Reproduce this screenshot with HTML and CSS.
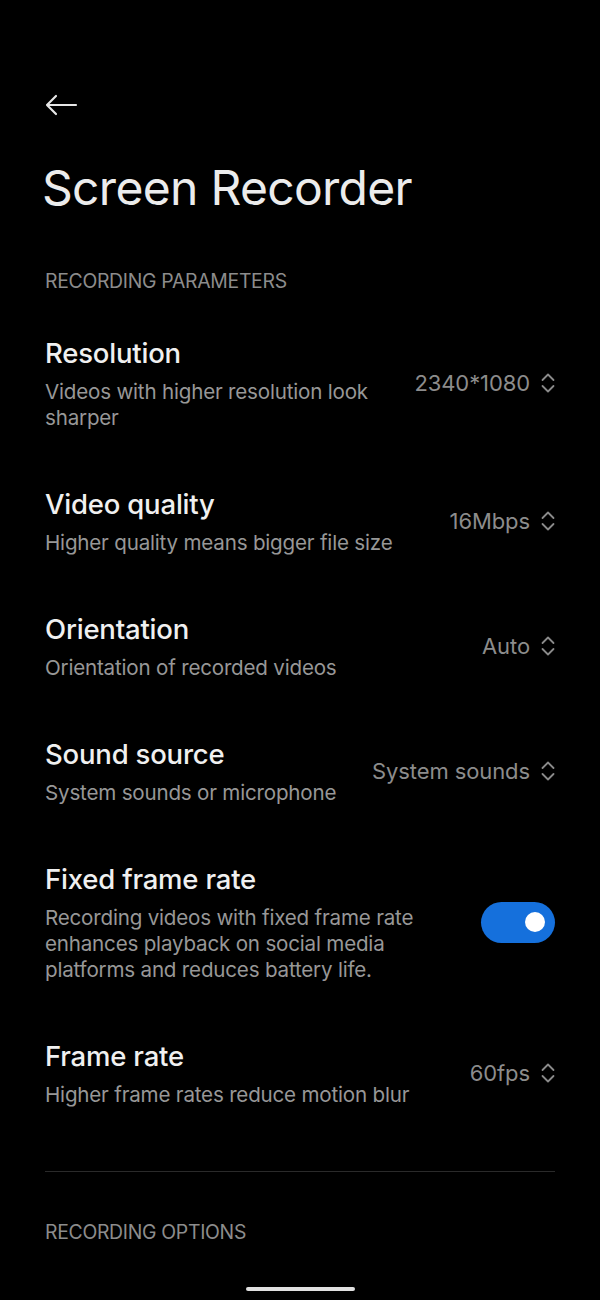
FILE: index.html
```html
<!DOCTYPE html>
<html lang="en">
<head>
<meta charset="utf-8">
<link rel="stylesheet" href="styles.css">
</head>
<body>
<div class="screen">
  <div class="topbar">
    <svg class="back" width="34" height="22" viewBox="0 0 34 22"><path d="M32 11H3M12 2L3 11l9 9" fill="none" stroke="#e6e6e6" stroke-width="2.2" stroke-linecap="round" stroke-linejoin="round"/></svg>
  </div>
  <h1 class="title">Screen Recorder</h1>

  <div class="section-head">RECORDING PARAMETERS</div>

  <div class="row">
    <div class="text">
      <div class="row-title">Resolution</div>
      <div class="row-sub">Videos with higher resolution look sharper</div>
    </div>
    <div class="value">2340*1080 <svg class="chev" width="14" height="22" viewBox="0 0 14 22"><path d="M1.5 8L7 2.5 12.5 8M1.5 14L7 19.5 12.5 14" fill="none" stroke="#8a8a8a" stroke-width="1.8" stroke-linecap="round" stroke-linejoin="round"/></svg></div>
  </div>

  <div class="row">
    <div class="text">
      <div class="row-title">Video quality</div>
      <div class="row-sub">Higher quality means bigger file size</div>
    </div>
    <div class="value">16Mbps <svg class="chev" width="14" height="22" viewBox="0 0 14 22"><path d="M1.5 8L7 2.5 12.5 8M1.5 14L7 19.5 12.5 14" fill="none" stroke="#8a8a8a" stroke-width="1.8" stroke-linecap="round" stroke-linejoin="round"/></svg></div>
  </div>

  <div class="row">
    <div class="text">
      <div class="row-title">Orientation</div>
      <div class="row-sub">Orientation of recorded videos</div>
    </div>
    <div class="value">Auto <svg class="chev" width="14" height="22" viewBox="0 0 14 22"><path d="M1.5 8L7 2.5 12.5 8M1.5 14L7 19.5 12.5 14" fill="none" stroke="#8a8a8a" stroke-width="1.8" stroke-linecap="round" stroke-linejoin="round"/></svg></div>
  </div>

  <div class="row">
    <div class="text">
      <div class="row-title">Sound source</div>
      <div class="row-sub">System sounds or microphone</div>
    </div>
    <div class="value">System sounds <svg class="chev" width="14" height="22" viewBox="0 0 14 22"><path d="M1.5 8L7 2.5 12.5 8M1.5 14L7 19.5 12.5 14" fill="none" stroke="#8a8a8a" stroke-width="1.8" stroke-linecap="round" stroke-linejoin="round"/></svg></div>
  </div>

  <div class="row">
    <div class="text">
      <div class="row-title">Fixed frame rate</div>
      <div class="row-sub">Recording videos with fixed frame rate enhances playback on social media platforms and reduces battery life.</div>
    </div>
    <div class="toggle"><span class="knob"></span></div>
  </div>

  <div class="row">
    <div class="text">
      <div class="row-title">Frame rate</div>
      <div class="row-sub">Higher frame rates reduce motion blur</div>
    </div>
    <div class="value">60fps <svg class="chev" width="14" height="22" viewBox="0 0 14 22"><path d="M1.5 8L7 2.5 12.5 8M1.5 14L7 19.5 12.5 14" fill="none" stroke="#8a8a8a" stroke-width="1.8" stroke-linecap="round" stroke-linejoin="round"/></svg></div>
  </div>

  <div class="divider"></div>

  <div class="section-head second">RECORDING OPTIONS</div>

  <div class="home-bar"></div>
</div>
</body>
</html>
```

FILE: styles.css
```css
html, body {
  margin: 0;
  padding: 0;
  background: #000;
}
body {
  font-family: Inter, Roboto, "Noto Sans", sans-serif;
  color: #ececec;
}
.screen {
  width: 600px;
  height: 1300px;
  box-sizing: border-box;
  padding: 0 45px;
  display: flex;
  flex-direction: column;
  position: relative;
  overflow: hidden;
}
.topbar {
  height: 22px;
  margin-top: 94px;
  display: flex;
  align-items: center;
}
.back {
  display: block;
  margin-left: -1px;
}
.title {
  margin: 42px 0 0 -3px;
  font-size: 48px;
  font-weight: 400;
  line-height: 60px;
  color: #ececec;
  letter-spacing: -0.7px;
}
.section-head {
  margin-top: 51px;
  font-size: 19.4px;
  line-height: 24px;
  color: #8c8c8c;
  letter-spacing: -0.3px;
}
.section-head.second {
  margin-top: 48px;
}
.row {
  display: flex;
  align-items: center;
  justify-content: space-between;
  gap: 20px;
  padding: 27px 0 28px;
}
.section-head + .row {
  padding-top: 42px;
}
.text {
  flex: 1;
  min-width: 0;
}
.row-title {
  font-size: 27.5px;
  font-weight: 500;
  line-height: 36px;
  color: #f0f0f0;
  letter-spacing: -0.2px;
}
.row-sub {
  margin-top: 8px;
  font-size: 20.6px;
  line-height: 26px;
  color: #979797;
  max-width: 400px;
  letter-spacing: -0.2px;
}
.value {
  display: flex;
  align-items: center;
  gap: 11px;
  font-size: 22px;
  color: #8c8c8c;
  white-space: nowrap;
  letter-spacing: -0.1px;
}
.chev {
  display: block;
}
.toggle {
  width: 74px;
  height: 41px;
  border-radius: 21px;
  background: #1570dc;
  display: flex;
  align-items: center;
  justify-content: flex-end;
  padding-right: 10px;
  box-sizing: border-box;
  flex: none;
}
.knob {
  width: 20px;
  height: 20px;
  border-radius: 50%;
  background: #fff;
}
.divider {
  height: 1px;
  background: #2a2a2a;
  margin-top: 35px;
}
.home-bar {
  position: absolute;
  left: 246px;
  top: 1287px;
  width: 109px;
  height: 4px;
  border-radius: 2px;
  background: #e0e0e0;
}
```
